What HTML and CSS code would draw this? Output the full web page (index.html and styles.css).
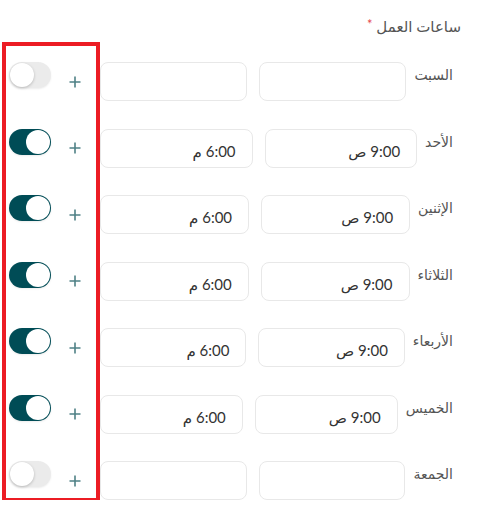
FILE: index.html
```html
<!DOCTYPE html>
<html lang="ar" dir="rtl">
<head>
<meta charset="utf-8">
<link rel="stylesheet" href="styles.css">
</head>
<body>
<div class="page">
  <div class="title">ساعات العمل <span class="req">*</span></div>
  <div class="rows">
    <div class="row">
      <div class="day">السبت</div>
      <div class="field"></div>
      <div class="field"></div>
      <div class="plus"><svg viewBox="0 0 12 12" width="12" height="12"><path d="M6 0.5V11.5M0.5 6H11.5"/></svg></div>
      <div class="toggle"><span class="knob"></span></div>
    </div>
    <div class="row">
      <div class="day">الأحد</div>
      <div class="field">9:00 ص</div>
      <div class="field">6:00 م</div>
      <div class="plus"><svg viewBox="0 0 12 12" width="12" height="12"><path d="M6 0.5V11.5M0.5 6H11.5"/></svg></div>
      <div class="toggle on"><span class="knob"></span></div>
    </div>
    <div class="row">
      <div class="day">الإثنين</div>
      <div class="field">9:00 ص</div>
      <div class="field">6:00 م</div>
      <div class="plus"><svg viewBox="0 0 12 12" width="12" height="12"><path d="M6 0.5V11.5M0.5 6H11.5"/></svg></div>
      <div class="toggle on"><span class="knob"></span></div>
    </div>
    <div class="row">
      <div class="day">الثلاثاء</div>
      <div class="field">9:00 ص</div>
      <div class="field">6:00 م</div>
      <div class="plus"><svg viewBox="0 0 12 12" width="12" height="12"><path d="M6 0.5V11.5M0.5 6H11.5"/></svg></div>
      <div class="toggle on"><span class="knob"></span></div>
    </div>
    <div class="row">
      <div class="day">الأربعاء</div>
      <div class="field">9:00 ص</div>
      <div class="field">6:00 م</div>
      <div class="plus"><svg viewBox="0 0 12 12" width="12" height="12"><path d="M6 0.5V11.5M0.5 6H11.5"/></svg></div>
      <div class="toggle on"><span class="knob"></span></div>
    </div>
    <div class="row">
      <div class="day">الخميس</div>
      <div class="field">9:00 ص</div>
      <div class="field">6:00 م</div>
      <div class="plus"><svg viewBox="0 0 12 12" width="12" height="12"><path d="M6 0.5V11.5M0.5 6H11.5"/></svg></div>
      <div class="toggle on"><span class="knob"></span></div>
    </div>
    <div class="row">
      <div class="day">الجمعة</div>
      <div class="field"></div>
      <div class="field"></div>
      <div class="plus"><svg viewBox="0 0 12 12" width="12" height="12"><path d="M6 0.5V11.5M0.5 6H11.5"/></svg></div>
      <div class="toggle"><span class="knob"></span></div>
    </div>
    <div class="highlight"></div>
  </div>
</div>
</body>
</html>
```
FILE: styles.css
```css
html, body {
  margin: 0;
  padding: 0;
  background: #ffffff;
}
body {
  font-family: Lato, "DejaVu Sans", sans-serif;
  color: #555555;
}
.page {
  width: 484px;
  box-sizing: border-box;
  padding: 12px 23px 0 9px;
}
.title {
  font-size: 15px;
  line-height: 24px;
  color: #555555;
}
.req {
  color: #e5484d;
  font-size: 13px;
  vertical-align: 3px;
}
.rows {
  position: relative;
  margin-top: 24px;
  padding-right: 8px;
  display: flex;
  flex-direction: column;
  gap: 27.5px;
}
.row {
  display: flex;
  align-items: flex-start;
  height: 39px;
}
.day {
  flex: none;
  font-size: 14px;
  line-height: 20px;
  padding-top: 3px;
  margin-left: 8px;
  color: #555555;
  white-space: nowrap;
}
.field {
  flex: 1 1 0;
  min-width: 0;
  height: 39px;
  box-sizing: border-box;
  border: 1px solid #e8e8e8;
  border-radius: 8px;
  padding: 10px 16px 0 16px;
  font-size: 15px;
  line-height: 22px;
  color: #333333;
  white-space: nowrap;
}
.field + .field {
  margin-right: 12px;
}
.plus {
  flex: none;
  width: 12px;
  height: 39px;
  display: flex;
  align-items: center;
  margin-right: 19px;
}
.plus svg {
  display: block;
  stroke: #4f8186;
  stroke-width: 1.6;
  fill: none;
}
.toggle {
  flex: none;
  position: relative;
  width: 42px;
  height: 26px;
  margin-right: 18px;
  border-radius: 13px;
  background: #ebebeb;
  box-shadow: 0 1px 2px rgba(0, 0, 0, 0.08);
}
.toggle .knob {
  position: absolute;
  top: 1px;
  left: 1px;
  width: 24px;
  height: 24px;
  border-radius: 50%;
  background: #ffffff;
  box-shadow: 0 1px 3px rgba(0, 0, 0, 0.22);
}
.toggle.on {
  background: #004c56;
}
.toggle.on .knob {
  left: auto;
  right: 1px;
  box-shadow: none;
}
.highlight {
  position: absolute;
  left: -7px;
  top: -20px;
  width: 98px;
  height: 460px;
  box-sizing: border-box;
  border: 4.5px solid #ec1c24;
  pointer-events: none;
}
```
